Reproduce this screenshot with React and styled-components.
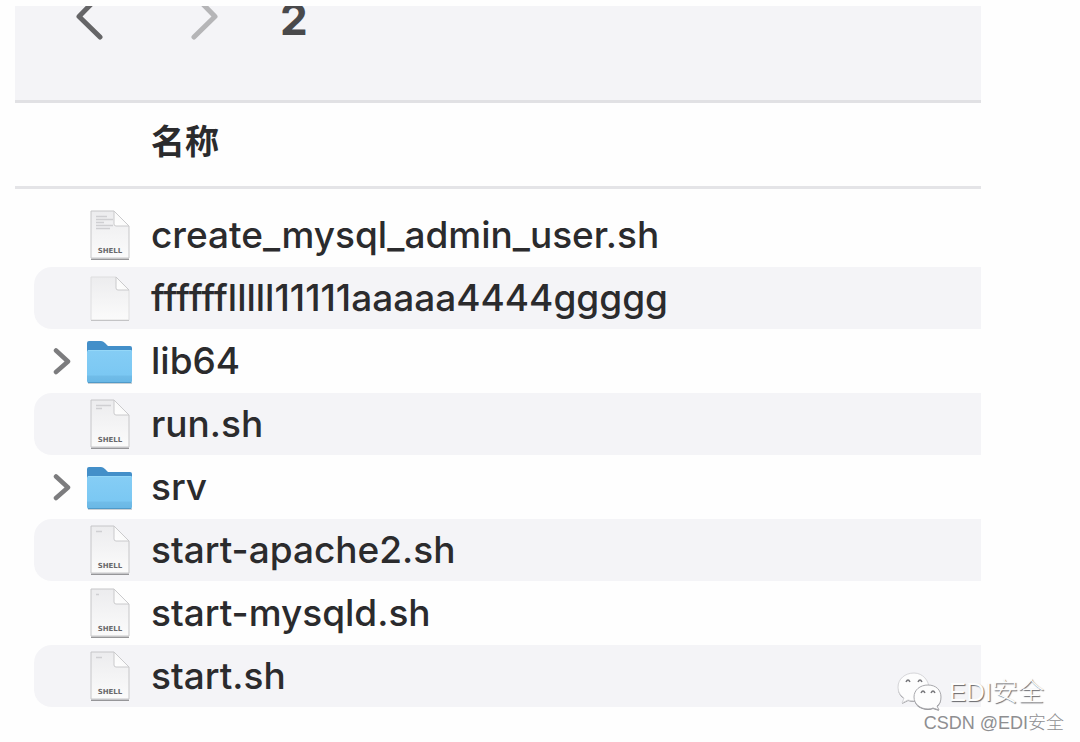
import React, { useState } from "react"
import styled, { createGlobalStyle } from "styled-components"

const GlobalStyle = createGlobalStyle`
  * {
    box-sizing: border-box;
  }
  body {
    margin: 0;
    background: #fefefe;
    color: #2b2b2d;
    font-family: Inter, "Noto Sans CJK SC", sans-serif;
  }
`

const Page = styled.main`
  position: relative;
  min-height: 100vh;
  padding: 6px 99px 32px 15px;
`

const Toolbar = styled.header`
  display: flex;
  align-items: flex-start;
  height: 97px;
  padding-left: 58px;
  overflow: hidden;
  background: #f4f4f7;
  border-bottom: 3px solid #e1e1e4;
`

const NavButton = styled.button`
  display: flex;
  margin: 0 80px 0 0;
  padding: 0;
  border: 0;
  background: none;
  color: ${props => (props.disabled ? "#b5b5b7" : "#656567")};

  &:last-of-type {
    margin-right: 55px;
  }
`

const FolderTitle = styled.h1`
  margin: 0;
  color: #49494b;
  font-size: 44px;
  font-weight: 700;
  line-height: 26px;
`

const ColumnHeader = styled.div`
  height: 86px;
  padding: 14px 0 0 136px;
  border-bottom: 3px solid #e4e4e7;
  font-size: 34px;
  font-weight: 700;
  line-height: 50px;
`

const FileList = styled.ul`
  margin: 0;
  padding: 15px 0 0 19px;
  list-style: none;
`

const Row = styled.li`
  display: flex;
  align-items: center;
  height: 63px;
  border-bottom: 1px solid #fefefe;
  border-radius: 18px 0 0 18px;
  background: ${props => (props.$striped ? "#f4f4f7" : "transparent")};
`

const ToggleSlot = styled.div`
  display: flex;
  flex: 0 0 50px;
  padding-left: 18px;
`

const Toggle = styled.button`
  display: flex;
  padding: 0;
  border: 0;
  background: none;
  color: #7c7c7e;
  cursor: pointer;
`

const IconSlot = styled.div`
  display: flex;
  flex: 0 0 67px;
`

const FileName = styled.span`
  font-size: 37px;
  font-weight: 500;
  line-height: 48px;
  white-space: nowrap;
`

const Watermark = styled.div`
  position: absolute;
  right: 16px;
  bottom: 8px;
  display: flex;
  flex-direction: column;
  align-items: flex-end;
  color: #fdfdfd;
  font-family: "Liberation Sans", "Noto Sans CJK SC", sans-serif;
  font-weight: 300;
`

const Account = styled.div`
  display: flex;
  align-items: center;
  gap: 6px;
  margin-right: 20px;
  font-size: 26px;
  line-height: 34px;
  text-shadow: 1px 1px 1px #66666a;
`

const Credit = styled.div`
  color: #8e8e91;
  font-size: 18px;
  line-height: 22px;
  text-shadow: -1px -1px 0 #fefefe;
`

const BackIcon = () => (
  <svg width="36" height="36" viewBox="0 0 36 36" fill="none" aria-hidden="true">
    <path d="M28-12 6 10.500 27 31" stroke="currentColor" strokeWidth="5" strokeLinecap="round" strokeLinejoin="round" />
  </svg>
)

const ForwardIcon = () => (
  <svg width="36" height="36" viewBox="0 0 36 36" fill="none" aria-hidden="true">
    <path d="M4-12 26 10.500 5 31" stroke="currentColor" strokeWidth="5" strokeLinecap="round" strokeLinejoin="round" />
  </svg>
)

const ExpandIcon = () => (
  <svg width="20" height="28" viewBox="0 0 20 28" fill="none" aria-hidden="true">
    <path d="M4 3.500 16 14.500 4 25" stroke="currentColor" strokeWidth="4.500" strokeLinecap="round" strokeLinejoin="round" />
  </svg>
)

const FolderIcon = () => (
  <svg width="52" height="50" viewBox="0 0 52 50" aria-hidden="true">
    <defs>
      <linearGradient id="folderFront" x1="0" y1="0" x2="0" y2="1">
        <stop offset="0" stopColor="#85cdf5" />
        <stop offset="0.750" stopColor="#7bc8f3" />
        <stop offset="0.800" stopColor="#70bce8" />
        <stop offset="1" stopColor="#68b7e5" />
      </linearGradient>
    </defs>
    <path d="M4 46h44v2H4z" fill="#8d9ba5" opacity="0.450" />
    <path d="M3 7q0-2 2-2h12q2 0 4 2l3 3h22q2 0 2 2v32H3z" fill="#438fc9" />
    <path d="M5 14h42q1 0 1 1v30q0 2-2 2H5q-2 0-2-2V16q0-2 2-2z" fill="url(#folderFront)" />
    <path d="M4 14.500h43" stroke="#94d7f8" />
    <path d="M4 46.500h43" stroke="#4f9ac9" />
  </svg>
)

// lines: how much of the script's preview shows on the page
const DocumentIcon = ({ shell, lines = [] }) => (
  <svg width="52" height="54" viewBox="0 0 52 54" aria-hidden="true">
    <defs>
      <linearGradient id="paper" x1="0" y1="0" x2="0" y2="1">
        <stop offset="0" stopColor="#ececee" />
        <stop offset="1" stopColor="#fbfbfb" />
      </linearGradient>
      <linearGradient id="fold" x1="0" y1="1" x2="1" y2="0">
        <stop offset="0" stopColor="#fff" />
        <stop offset="0.500" stopColor="#fafafa" />
        <stop offset="1" stopColor="#d2d2d4" />
      </linearGradient>
    </defs>
    {shell && <path d="M7 50.500h38v1.500H7z" fill="#8c8c8e" opacity="0.900" />}
    <path
      d={shell ? "M7 3h23l15 15v32H7z" : "M7 6h25l13 13v30H7z"}
      fill="url(#paper)"
      stroke={shell ? "#c6c6c8" : "#dededf"}
    />
    {!shell && <path d="M7 49.500h38" stroke="#c4c4c6" />}
    {lines.map((width, i) => (
      <path key={i} d={`M12 ${8.5 + i * 3}h${width}`} stroke="#cfcfd2" strokeWidth="1.500" />
    ))}
    <path
      d={shell ? "M30 3v13q0 2 2 2h13z" : "M32 6v11q0 2 2 2h11z"}
      fill="url(#fold)"
      stroke="#cacacc"
    />
    {shell && (
      <text x="26" y="45" textAnchor="middle" fill="#69696b" fontFamily="DejaVu Sans, sans-serif" fontSize="7" fontWeight="700">
        SHELL
      </text>
    )}
  </svg>
)

const WechatIcon = () => (
  <svg width="46" height="40" viewBox="0 0 46 40" aria-hidden="true">
    <g fill="#8c8c90" transform="translate(0 1)">
      <path d="M17 1C8 1 1 7 1 15c0 5 2 8 6 11l-2 5 6-3q3 1 7 1c8 0 14-6 14-13S26 1 17 1z" />
      <path d="M31 13c-8 0-14 5-14 12s6 12 14 12q3 0 5-1l6 2-2-4c3-2 4-5 4-9 0-7-5-12-13-12z" />
    </g>
    <path
      d="M17 1C8 1 1 7 1 15c0 5 2 8 6 11l-2 5 6-3q3 1 7 1c8 0 14-6 14-13S26 1 17 1z"
      fill="#fdfdfd"
      stroke="#d6d6d9"
    />
    <path
      d="M31 13c-8 0-14 5-14 12s6 12 14 12q3 0 5-1l6 2-2-4c3-2 4-5 4-9 0-7-5-12-13-12z"
      fill="#fdfdfd"
      stroke="#a9a9ad"
    />
    <path d="M9 10q2-4 4 0M21 10q2-4 4 0M24 21q2-4 4 0M34 21q2-4 4 0" fill="none" stroke="#77777b" strokeWidth="1.500" />
  </svg>
)

const files = [
  { name: "create_mysql_admin_user.sh", shell: true, lines: [11, 17, 8, 17, 14] },
  { name: "fffffflllll11111aaaaa4444ggggg" },
  { name: "lib64", folder: true },
  { name: "run.sh", shell: true, lines: [15, 6] },
  { name: "srv", folder: true },
  { name: "start-apache2.sh", shell: true, lines: [6] },
  { name: "start-mysqld.sh", shell: true, lines: [3] },
  { name: "start.sh", shell: true, lines: [6] },
]

const FileRow = ({ file, striped }) => {
  const [open, setOpen] = useState(false)

  return (
    <Row $striped={striped}>
      <ToggleSlot>
        {file.folder && (
          <Toggle type="button" aria-label={file.name} aria-expanded={open} onClick={() => setOpen(!open)}>
            <ExpandIcon />
          </Toggle>
        )}
      </ToggleSlot>
      <IconSlot>
        {file.folder ? <FolderIcon /> : <DocumentIcon shell={file.shell} lines={file.lines} />}
      </IconSlot>
      <FileName>{file.name}</FileName>
    </Row>
  )
}

const App = () => (
  <>
    <GlobalStyle />
    <Page>
      <Toolbar>
        <NavButton type="button" aria-label="后退">
          <BackIcon />
        </NavButton>
        <NavButton type="button" aria-label="前进" disabled>
          <ForwardIcon />
        </NavButton>
        <FolderTitle>2</FolderTitle>
      </Toolbar>
      <ColumnHeader>名称</ColumnHeader>
      <FileList>
        {files.map((file, i) => (
          <FileRow key={file.name} file={file} striped={i % 2 === 1} />
        ))}
      </FileList>
      <Watermark>
        <Account>
          <WechatIcon />
          EDI安全
        </Account>
        <Credit>CSDN @EDI安全</Credit>
      </Watermark>
    </Page>
  </>
)

export default App
